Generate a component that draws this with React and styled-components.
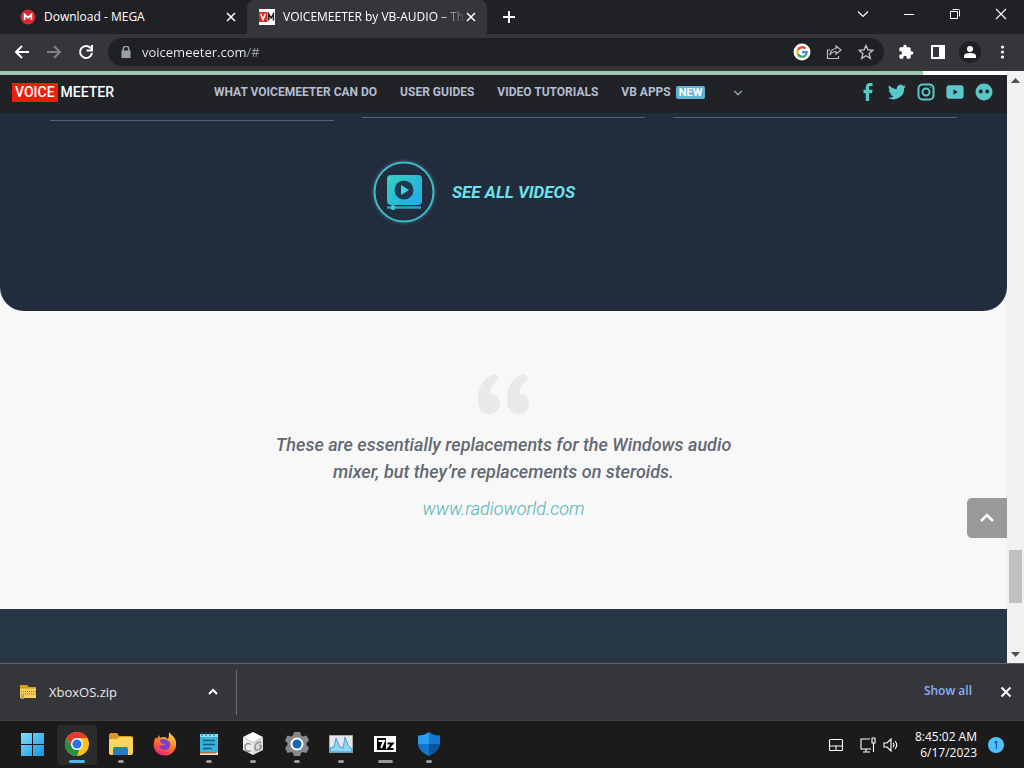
import React from 'react';
import styled, { createGlobalStyle, css } from 'styled-components';

const Global = createGlobalStyle`
  * { box-sizing: border-box; }
  body { margin: 0; background: #202124; font-family: "Open Sans", "Noto Sans", sans-serif; }
  button, input { font: inherit; color: inherit; }
  button { background: none; border: 0; padding: 0; cursor: default; }
  a { color: inherit; text-decoration: none; }
  svg { display: block; flex: none; }
`;

const Screen = styled.div`
  min-height: 100vh;
  display: flex;
  flex-direction: column;
`;

/* ---------- tab strip ---------- */

const TabStrip = styled.header`
  display: flex;
  height: 34px;
  background: #202124;
  color: #fff;
`;

const TabItem = styled.div`
  display: flex;
  align-items: center;
  width: ${p => (p.$active ? 240 : 247)}px;
  padding: 0 8px 0 ${p => (p.$active ? 12 : 20)}px;
  border-radius: 8px 8px 0 0;
  background: ${p => (p.$active ? '#35363a' : 'transparent')};
`;

const TabTitle = styled.span`
  flex: 1;
  min-width: 0;
  margin-left: 8px;
  white-space: nowrap;
  font-size: 12px;
  line-height: 16px;
  ${p => p.$fade && css`mask-image: linear-gradient(to right, #000 85%, rgba(0, 0, 0, 0.2));`}
`;

const IconButton = styled.button`
  display: flex;
  align-items: center;
  justify-content: center;
  flex: none;
  width: ${p => p.$w || 32}px;
  height: ${p => p.$h || 32}px;
  color: ${p => p.$color || '#fff'};
`;

const WindowControls = styled.div`
  display: flex;
  margin-left: auto;
  height: 28px;
`;

/* ---------- toolbar ---------- */

const Toolbar = styled.div`
  display: flex;
  align-items: center;
  height: 37px;
  padding: 0 6px;
  background: #35363a;
  border-bottom: 1px solid #3f3336;
`;

const Omnibox = styled.form`
  display: flex;
  align-items: center;
  flex: 1;
  min-width: 0;
  height: 28px;
  margin: 0 6px;
  padding: 0 2px 0 12px;
  border-radius: 14px;
  background: #202124;
  color: #9aa0a6;
`;

const AddressInput = styled.input`
  flex: 1;
  min-width: 0;
  margin-left: 10px;
  padding: 0;
  border: 0;
  outline: 0;
  font-size: 13px;
  line-height: 20px;
  color: transparent;
  background: linear-gradient(to right, #f1f3f4 105px, #9aa0a6 105px);
  background-clip: text;
`;

/* ---------- web page ---------- */

const Viewport = styled.main`
  position: relative;
  display: flex;
  flex: 1;
`;

const Page = styled.div`
  display: flex;
  flex-direction: column;
  flex: 1;
  min-width: 0;
  background: #f8f8f8;
  font-family: Roboto, sans-serif;
`;

const Progress = styled.div`
  height: 4px;
  background: linear-gradient(to right, #9cc8b0 91.7%, #fff 91.7%);
`;

const SiteNav = styled.nav`
  display: flex;
  align-items: center;
  height: 38px;
  padding: 0 14px 4px 12px;
  background: #202226;
`;

const Brand = styled.a`
  display: flex;
  align-items: center;
  gap: 3px;
  width: 202px;
  flex: none;
  font-size: 14px;
  line-height: 19px;
  font-weight: 500;
  color: #fff;
`;

const BrandMark = styled.span`
  padding: 0 3px;
  background: #f01c0c;
`;

const NavLinks = styled.div`
  display: flex;
  align-items: center;
  gap: 23px;
  white-space: nowrap;
  font-size: 12px;
  line-height: 20px;
  font-weight: 700;
  color: #b4bdd2;
`;

const NavLink = styled.a`
  display: flex;
  align-items: center;
  gap: 5px;
`;

const NewTag = styled.span`
  padding: 0 3px;
  border-radius: 2px;
  background: #5fb3d3;
  color: #fff;
  font-size: 11px;
  line-height: 13px;
`;

const Social = styled.div`
  display: flex;
  align-items: center;
  gap: 11px;
  margin-left: auto;
  color: #5ac8c6;
`;

const Videos = styled.section`
  background: #212d3d;
  border-radius: 0 0 24px 24px;
  padding-bottom: 85px;
`;

const Rules = styled.div`
  display: grid;
  grid-template-columns: repeat(3, 1fr);
  gap: 28px;
  padding: 4px 50px 0;
`;

const Rule = styled.div`
  height: ${p => (p.$tall ? 4 : 1)}px;
  border-bottom: 1px solid #546173;
`;

const SeeAll = styled.a`
  display: flex;
  align-items: center;
  justify-content: center;
  gap: 14px;
  margin-top: 37px;
  padding-right: 62px;
  color: #6ce2ec;
  font-size: 17px;
  line-height: 24px;
  font-weight: 700;
  font-style: italic;
`;

const Quote = styled.section`
  display: flex;
  flex-direction: column;
  align-items: center;
  padding: 63px 20px 87px;
  text-align: center;
  font-style: italic;
`;

const QuoteText = styled.blockquote`
  max-width: 480px;
  margin: 17px 0 0;
  font-size: 18px;
  line-height: 27px;
  font-weight: 500;
  color: #626973;
`;

const QuoteLink = styled.a`
  margin-top: 10px;
  font-size: 18px;
  line-height: 27px;
  font-weight: 300;
  color: #4fb3b0;
`;

const Footer = styled.section`
  flex: 1;
  min-height: 48px;
  background: #263646;
`;

const ToTop = styled.button`
  position: absolute;
  right: 17px;
  bottom: 125px;
  display: flex;
  align-items: center;
  justify-content: center;
  width: 40px;
  height: 40px;
  border-radius: 5px 0 0 5px;
  background: #999;
  color: #fff;
`;

const ScrollBar = styled.div`
  display: flex;
  flex-direction: column;
  align-items: center;
  width: 17px;
  padding: 7px 0 6px;
  background: #f1f1f1;
`;

const Thumb = styled.div`
  width: 13px;
  height: 53px;
  margin: auto 0 49px;
  background: #c1c1c1;
`;

/* ---------- download shelf ---------- */

const Shelf = styled.section`
  display: flex;
  align-items: center;
  height: 58px;
  padding: 0 2px 0 20px;
  background: #35363a;
  border-top: 1px solid #5a626b;
  border-bottom: 1px solid #3f4044;
  color: #e8eaed;
`;

const Download = styled.div`
  display: flex;
  align-items: center;
  width: 217px;
  height: 45px;
  padding-right: 7px;
  border-right: 1px solid #6b6e73;
  font-size: 13px;
  line-height: 18px;
`;

const FileName = styled.span`
  flex: 1;
  margin-left: 12px;
`;

const ShowAll = styled.button`
  height: 28px;
  margin-left: auto;
  margin-right: 18px;
  padding: 0 0 2px 14px;
  border-left: 1px solid #3b3c41;
  font-size: 12px;
  line-height: 16px;
  font-weight: 600;
  color: #8ab0f8;
`;

/* ---------- taskbar ---------- */

const Taskbar = styled.footer`
  display: flex;
  align-items: center;
  height: 47px;
  padding: 0 20px 0 13px;
  background: #1b1b1b;
  color: #fff;
`;

const Apps = styled.div`
  display: flex;
  gap: 4px;
`;

const AppButton = styled.button`
  display: flex;
  flex-direction: column;
  align-items: center;
  width: 40px;
  height: 40px;
  padding-top: 7px;
  gap: 4px;
  border-radius: 4px;
  background: ${p => (p.$active ? '#2b2b2b' : 'transparent')};
  &::after {
    content: "";
    width: ${p => p.$dash || 0}px;
    height: 3px;
    border-radius: 2px;
    background: ${p => (p.$active ? '#55b3ea' : '#989898')};
  }
`;

const Tray = styled.div`
  display: flex;
  align-items: center;
  gap: 16px;
  margin-left: auto;
`;

const TrayPair = styled.div`
  display: flex;
  align-items: center;
  gap: 7px;
`;

const ClockGroup = styled.div`
  display: flex;
  align-items: center;
  gap: 11px;
`;

const Clock = styled.time`
  text-align: right;
  font-size: 12px;
  line-height: 16px;
`;

const Badge = styled.span`
  width: 16px;
  height: 16px;
  border-radius: 8px;
  background: #4cc2ff;
  color: #123;
  font-size: 10px;
  line-height: 16px;
  text-align: center;
`;

/* ---------- drawings ---------- */

const Line = ({ d, s = 16, w = 1.5, fill = 'none', vb = 16 }) => (
  <svg width={s} height={s} viewBox={`0 0 ${vb} ${vb}`} fill={fill} stroke="currentColor" strokeWidth={w} aria-hidden="true"><path d={d} /></svg>
);
const Solid = ({ d, s = 16, vb = 24 }) => (
  <svg width={s} height={s} viewBox={`0 0 ${vb} ${vb}`} fill="currentColor" fillRule="evenodd" aria-hidden="true"><path d={d} /></svg>
);

const Mega = () => (
  <svg width="16" height="16" viewBox="0 0 16 16"><circle cx="8" cy="8" r="7.5" fill="#d9272e" /><path d="M4.600 11V5.400L8 8.700l3.400-3.300V11" fill="none" stroke="#fff" strokeWidth="1.700" /></svg>
);
const VmIcon = () => (
  <svg width="16" height="16" viewBox="0 0 16 16"><path fill="#fff" d="M0 0h16v16H0z" /><path fill="#e0271c" d="M0 3h8.500v10H0z" /><path d="M1.600 4.800 4 10.800l2.400-6" fill="none" stroke="#fff" strokeWidth="1.500" /><path d="M9.700 11.500V5l2.400 4 2.300-4v6.500" fill="none" stroke="#222" strokeWidth="1.500" /></svg>
);
const Google = () => (
  <svg width="18" height="18" viewBox="0 0 18 18" fill="none" strokeWidth="2.200"><circle cx="9" cy="9" r="8.500" fill="#fff" /><path d="M12.400 5.600A4.700 4.700 0 0 0 4.800 7" stroke="#ea4335" /><path d="M4.800 7a4.700 4.700 0 0 0 0 4" stroke="#fbbc05" /><path d="M4.800 11a4.700 4.700 0 0 0 7.400 1.500" stroke="#34a853" /><path d="M9 9.200h4.700a4.700 4.700 0 0 1-1.500 3.300" stroke="#4285f4" /></svg>
);
const VideoIcon = () => (
  <svg width="68" height="68" viewBox="0 0 68 68">
    <defs><linearGradient id="vid" x1="0" y1="0" x2="1" y2="1"><stop offset="0" stopColor="#38d0bd" /><stop offset="1" stopColor="#20a8f0" /></linearGradient>
      <radialGradient id="halo"><stop offset=".82" stopColor="#3c5366" /><stop offset="1" stopColor="#212d3d" /></radialGradient></defs>
    <circle cx="34" cy="34" r="34" fill="url(#halo)" />
    <circle cx="34" cy="34" r="29.500" fill="#212d3d" stroke="#38bfc9" strokeWidth="2" />
    <rect x="17" y="17" width="35" height="30" rx="4" fill="url(#vid)" />
    <circle cx="34" cy="32" r="9.500" fill="#1f3a4e" /><path d="M31 27v10l8-5z" fill="#45cfe0" />
    <path d="M17 49.500h34" stroke="#2f9fc0" strokeWidth="2.500" /><circle cx="23" cy="49.500" r="2.500" fill="#38c8d8" />
  </svg>
);
const QuoteMark = () => (
  <svg width="52" height="40" viewBox="0 0 52 40" fill="#e7e9eb">
    <path id="qm" d="M16 0C5 4 0 13 0 26c0 9 4 14 11 14 6 0 11-4 11-10 0-7-4-10-10-10 0-6 4-11 9-15-1-3-3-5-5-5z" />
    <use href="#qm" x="29" />
  </svg>
);
const Zip = () => (
  <svg width="17" height="16" viewBox="0 0 17 16"><path d="M0 1h7l2 2h7v4H0z" fill="#d99b1c" /><path d="M0 4.500h16V14H0z" fill="#f7cf5b" /><path d="M1 7.500h15M1 10h15" stroke="#9a7a33" strokeDasharray="1 1" /><path d="M1 11h3v4H1z" fill="#b99a9a" /></svg>
);
const Start = () => (
  <svg width="24" height="24" viewBox="0 0 24 24"><defs><linearGradient id="win" x1="0" y1="0" x2="1" y2="1"><stop stopColor="#7fe0ff" /><stop offset="1" stopColor="#1494e8" /></linearGradient></defs><path fill="url(#win)" d="M0 1h11v11H0zM12 1h11v11H12zM0 13h11v11H0zM12 13h11v11H12z" /></svg>
);
const Chrome = () => (
  <svg width="24" height="24" viewBox="0 0 24 24"><circle cx="12" cy="12" r="12" fill="#fbc116" /><path d="M1.600 6A12 12 0 0 1 22.400 6H12a6 6 0 0 0-5.200 9z" fill="#e33b2e" /><path d="M1.600 6l5.200 9a6 6 0 0 0 7.600 2.500L12 24A12 12 0 0 1 1.600 6z" fill="#229342" /><circle cx="12" cy="12" r="6" fill="#fff" /><circle cx="12" cy="12" r="4.600" fill="#2a73e8" /></svg>
);
const Folder = () => (
  <svg width="24" height="24" viewBox="0 0 24 24"><path d="M0 3q0-2 2-2h6l2 3h12q2 0 2 2v5H0z" fill="#d99a1e" /><path d="M0 7h8l2-2h12q2 0 2 2v14q0 2-2 2H2q-2 0-2-2z" fill="#fcd35e" /><path d="M4 23v-6q0-2 2-2h11q2 0 2 2v6z" fill="#1f7cc7" /></svg>
);
const Firefox = () => (
  <svg width="24" height="24" viewBox="0 0 24 24"><defs><linearGradient id="fx" x1=".8" y1="0" x2=".3" y2="1"><stop stopColor="#ffe14a" /><stop offset=".5" stopColor="#ff7a2b" /><stop offset="1" stopColor="#f2246c" /></linearGradient></defs><path d="M16 0c2 3 5 4 6.500 8C25 16 20 23.500 12 23.500S-.5 17 1 10c.4-2 1-4 2-5l1 2 2-4 1 3c3-2 6-1 8 1 1-2 1-4 1-7z" fill="url(#fx)" /><path d="M7 8c3-2 8-1 10 3 1 4-2 7-5 7-4 0-6-3-6-5 2 1 4 1 6-1-3 0-5-1-5-4z" fill="#7a3fd0" /></svg>
);
const Notepad = () => (
  <svg width="24" height="24" viewBox="0 0 24 24"><path d="M3 2h18v19H3z" fill="#36b5dc" /><path d="M3 2h18v3H3z" fill="#8bdcf0" /><path d="M3 20h18v3H3z" fill="#e9e4dc" /><path d="M3 20h18l-3 1.500H3z" fill="#b8733a" /><path d="M5 0v4M9 0v4M13 0v4M17 0v4" stroke="#176b91" /><path d="M6 8.500h12M6 12.500h12M6 16.500h9" stroke="#115a80" strokeWidth="1.500" /></svg>
);
const Cube = () => (
  <svg width="24" height="24" viewBox="0 0 24 24"><path d="M12 0l10 5-10 5.500L2 5z" fill="#fff" /><path d="M2 5l10 5.500V23L2 18z" fill="#ececec" /><path d="M12 10.500L22 5v13l-10 5z" fill="#dcdcdc" /><path d="M10 12.500c-3-2-6-1-6 2.500s3 5.500 6 3.500" fill="none" stroke="#909090" strokeWidth="1.500" /><path d="M20 10.500c-3-1-6 1-6 5s4 3 6 0v-2h-2" fill="none" stroke="#909090" strokeWidth="1.500" /></svg>
);
const Gear = () => (
  <svg width="24" height="24" viewBox="0 0 24 24"><path d="M9 0h6l1 3.500 2 1 3.500-1 2.500 5-2.500 2.500v2L24 16l-2.500 5-3.500-1-2 1-1 3H9l-1-3-2-1-3.500 1L0 16l2.500-3v-2L0 8.500l2.500-5 3.500 1 2-1z" fill="#858a90" /><circle cx="12" cy="12" r="6.500" fill="#fff" /><circle cx="12" cy="12" r="4.500" fill="#1769b5" /></svg>
);
const Graph = () => (
  <svg width="24" height="24" viewBox="0 0 24 24"><path d="M.5 3.500h23v17H.5z" fill="#e8e6ee" stroke="#aaa" /><path d="M1 20v-4l4-1 2-9 4 9 3 1 2-11 3 8 4 4v3z" fill="#8ed4f5" stroke="#2a91cf" strokeWidth=".8" /></svg>
);
const SevenZip = () => (
  <svg width="24" height="24" viewBox="0 0 24 24"><path d="M1 4h22v16H1z" fill="#fff" /><path d="M4 6h9v12H4z" fill="#000" /><path d="M5.500 9h5.500L8 16" fill="none" stroke="#fff" strokeWidth="2" /><path d="M14.500 11.500h5l-4.500 5.500h5.500" fill="none" stroke="#000" strokeWidth="2" /></svg>
);
const Shield = () => (
  <svg width="24" height="24" viewBox="0 0 24 24"><path d="M12 0c3 2.500 7 3.500 11 3.500V10c0 7-5 11-11 14z" fill="#1378d4" /><path d="M12 0C9 2.500 5 3.500 1 3.500V10c0 7 5 11 11 14z" fill="#2b9df0" /><path d="M1.300 12H12v12C6.500 21 2 18 1.300 12z" fill="#1473cc" /><path d="M22.700 12H12v12c5.500-3 10-6 10.700-12z" fill="#0b559f" /></svg>
);

const CROSS = 'M4 4l8 8M12 4l-8 8';
const apps = [
  ['Start', Start, 0], ['Chrome', Chrome, 16, true], ['File Explorer', Folder, 6], ['Firefox', Firefox, 0],
  ['Notepad', Notepad, 6], ['Cube', Cube, 6], ['Settings', Gear, 6], ['Monitor', Graph, 6], ['7-Zip', SevenZip, 15], ['Security', Shield, 6],
];

export default function App() {
  return (
    <Screen>
      <Global />
      <TabStrip>
        <TabItem>
          <Mega /><TabTitle>Download - MEGA</TabTitle>
          <IconButton $w={16} $h={16} aria-label="Close tab"><Line d={CROSS} /></IconButton>
        </TabItem>
        <TabItem $active>
          <VmIcon /><TabTitle $fade>VOICEMEETER by VB-AUDIO – Th</TabTitle>
          <IconButton $w={16} $h={16} aria-label="Close tab"><Line d={CROSS} /></IconButton>
        </TabItem>
        <IconButton $w={44} $h={34} aria-label="New tab"><Line d="M8 2v12M2 8h12" w={2} /></IconButton>
        <WindowControls>
          <IconButton $w={46} $h={28} aria-label="Search tabs"><Line d="M3 5.500l5 5 5-5" w={1.1} /></IconButton>
          <IconButton $w={46} $h={28} aria-label="Minimize"><Line d="M3 8.500h10" w={1} /></IconButton>
          <IconButton $w={46} $h={28} aria-label="Restore"><Line d="M3.500 5.500h7v7h-7zM5.500 3.500h6q1 0 1 1v6" w={1} /></IconButton>
          <IconButton $w={46} $h={28} aria-label="Close"><Line d="M3 3l10 10M13 3L3 13" w={1.1} /></IconButton>
        </WindowControls>
      </TabStrip>
      <Toolbar>
        <IconButton aria-label="Back"><Line d="M15 8H2M8 2L2 8l6 6" w={2} /></IconButton>
        <IconButton $color="#828386" aria-label="Forward"><Line d="M1 8h13M8 2l6 6-6 6" w={2} /></IconButton>
        <IconButton aria-label="Reload"><Line d="M13 4.500A6 6 0 1 0 14 9M14 1v5.500H8.500" w={2} /></IconButton>
        <Omnibox onSubmit={e => e.preventDefault()}>
          <Solid s={12} d="M5 9V6a7 7 0 0 1 14 0v3h2v15H3V9zm3 0h8V6a4 4 0 0 0-8 0z" />
          <AddressInput aria-label="Address" defaultValue="voicemeeter.com/#" />
          <IconButton type="button" aria-label="Google"><Google /></IconButton>
          <IconButton type="button" $color="#bcbec1" aria-label="Share"><Line d="M4 6H1.500v8.500h11V12M10 2l5 4-5 4V7.500Q6 7.500 4 11q.5-6 6-6.500z" w={1.2} /></IconButton>
          <IconButton type="button" $color="#c8cacd" aria-label="Bookmark"><Line d="M8 1.500l2 4.500 4.800.4-3.700 3.200 1.200 4.800L8 11.800l-4.300 2.600 1.200-4.800L1.200 6.400 6 6z" w={1.3} /></IconButton>
        </Omnibox>
        <IconButton aria-label="Extensions"><Solid d="M20.500 11H19V7c0-1.100-.9-2-2-2h-4V3.500a2.500 2.500 0 0 0-5 0V5H4c-1.100 0-2 .9-2 2v3.800h1.500a2.700 2.700 0 0 1 0 5.400H2V20c0 1.100.9 2 2 2h3.800v-1.500a2.700 2.700 0 0 1 5.400 0V22H17c1.100 0 2-.9 2-2v-4h1.500a2.500 2.500 0 0 0 0-5z" /></IconButton>
        <IconButton aria-label="Side panel"><Solid vb={16} d="M1 1h14v14H1zM3 3v10h6V3z" /></IconButton>
        <IconButton aria-label="Profile"><svg width="22" height="22" viewBox="0 0 22 22"><circle cx="11" cy="11" r="11" fill="#202124" /><circle cx="11" cy="8" r="3" fill="#fff" /><path d="M5 17v-2q0-3 6-3t6 3v2z" fill="#fff" /></svg></IconButton>
        <IconButton aria-label="Menu"><svg width="16" height="16" viewBox="0 0 16 16" fill="currentColor"><circle cx="8.500" cy="3" r="1.600" /><circle cx="8.500" cy="8" r="1.600" /><circle cx="8.500" cy="13" r="1.600" /></svg></IconButton>
      </Toolbar>

      <Viewport>
        <Page>
          <Progress />
          <SiteNav>
            <Brand href="#"><BrandMark>VOICE</BrandMark>MEETER</Brand>
            <NavLinks>
              <NavLink href="#">WHAT VOICEMEETER CAN DO</NavLink>
              <NavLink href="#">USER GUIDES</NavLink>
              <NavLink href="#">VIDEO TUTORIALS</NavLink>
              <NavLink href="#">VB APPS <NewTag>NEW</NewTag></NavLink>
              <IconButton $w={20} $h={20} $color="#b4bdd2" aria-label="More"><Line s={12} d="M3 6.500l5 5 5-5" /></IconButton>
            </NavLinks>
            <Social>
              <a href="#" aria-label="Facebook"><Solid s={18} d="M9 24V13.500H6V9h3V6c0-4 2-6 5.500-6H18v4h-2.500C14 4 13.500 4.600 13.500 6v3H18l-.6 4.500h-3.900V24z" /></a>
              <a href="#" aria-label="Twitter"><Solid s={18} d="M24 4.600a10 10 0 0 1-2.800.8 5 5 0 0 0 2.100-2.700 10 10 0 0 1-3.100 1.200 4.900 4.900 0 0 0-8.400 4.500A14 14 0 0 1 1.700 3.100a4.900 4.900 0 0 0 1.500 6.600 5 5 0 0 1-2.200-.6 4.900 4.900 0 0 0 3.900 4.900 5 5 0 0 1-2.200.1 4.900 4.900 0 0 0 4.600 3.400A9.900 9.900 0 0 1 0 19.500 14 14 0 0 0 21.500 7.100 10 10 0 0 0 24 4.600z" /></a>
              <a href="#" aria-label="Instagram"><svg width="18" height="18" viewBox="0 0 18 18" fill="none" stroke="currentColor" strokeWidth="2"><rect x="1.500" y="1.500" width="15" height="15" rx="4" /><circle cx="9" cy="9" r="3.500" /><circle cx="13.500" cy="4.500" r=".3" strokeWidth="1" /></svg></a>
              <a href="#" aria-label="YouTube"><Solid s={18} d="M4 3h16q3.500 0 3.500 4v10q0 4-3.500 4H4Q.5 21 .5 17V7Q.5 3 4 3zm6 5.500v7l6-3.500z" /></a>
              <a href="#" aria-label="Community"><svg width="18" height="18" viewBox="0 0 18 18"><circle cx="9" cy="9" r="8.500" fill="currentColor" /><circle cx="5.800" cy="8.500" r="2" fill="#202226" /><circle cx="12.200" cy="8.500" r="2" fill="#202226" /></svg></a>
            </Social>
          </SiteNav>
          <Videos>
            <Rules><Rule $tall /><Rule /><Rule /></Rules>
            <SeeAll href="#"><VideoIcon />SEE ALL VIDEOS</SeeAll>
          </Videos>
          <Quote>
            <QuoteMark />
            <QuoteText>These are essentially replacements for the Windows audio mixer, but they’re replacements on steroids.</QuoteText>
            <QuoteLink href="#">www.radioworld.com</QuoteLink>
          </Quote>
          <Footer />
        </Page>
        <ScrollBar>
          <svg width="9" height="5" viewBox="0 0 9 5"><path d="M0 5l4.500-5L9 5z" fill="#505050" /></svg>
          <Thumb />
          <svg width="9" height="5" viewBox="0 0 9 5"><path d="M0 0l4.500 5L9 0z" fill="#505050" /></svg>
        </ScrollBar>
        <ToTop aria-label="Back to top"><Line d="M2 11l6-6 6 6" w={2.5} /></ToTop>
      </Viewport>

      <Shelf>
        <Download>
          <Zip /><FileName>XboxOS.zip</FileName>
          <IconButton aria-label="Options"><Line d="M4 10l4-4 4 4" w={2} /></IconButton>
        </Download>
        <ShowAll>Show all</ShowAll>
        <IconButton aria-label="Close shelf"><Line d="M3.500 3.500l9 9M12.500 3.500l-9 9" w={2} /></IconButton>
      </Shelf>

      <Taskbar>
        <Apps>
          {apps.map(([name, Icon, dash, active]) => (
            <AppButton key={name} aria-label={name} $dash={dash} $active={active}><Icon /></AppButton>
          ))}
        </Apps>
        <Tray>
          <Line d="M2.500 2.500h11q1 0 1 1v9q0 1-1 1h-11q-1 0-1-1v-9q0-1 1-1zM1.500 9h13M8 9v4" w={1.1} />
          <TrayPair>
            <Line d="M10 2H1v10h10M6 12v3M3 15h7M12 1h3v5h-3zM13.500 6v9" w={1.1} />
            <Line d="M1 6h3l4-4v12l-4-4H1zM10 6q2 2 0 4M12 4q3.500 4 0 8" w={1.1} />
          </TrayPair>
          <ClockGroup>
            <Clock>8:45:02 AM<br />6/17/2023</Clock>
            <Badge>1</Badge>
          </ClockGroup>
        </Tray>
      </Taskbar>
    </Screen>
  );
}
